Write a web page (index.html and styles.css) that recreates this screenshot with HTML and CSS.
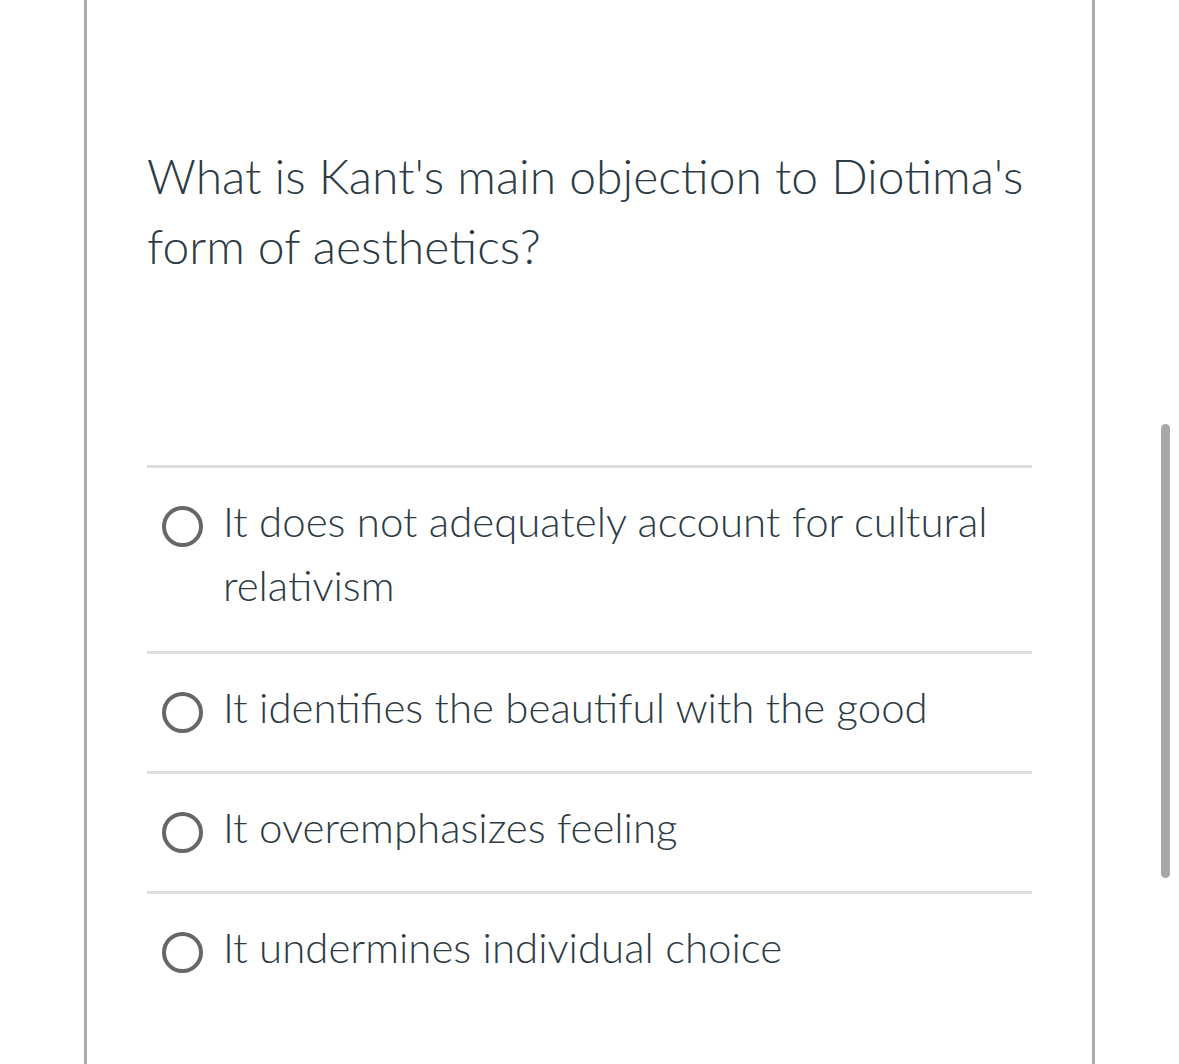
FILE: index.html
```html
<!DOCTYPE html>
<html lang="en">
<head>
<meta charset="utf-8">
<title>Quiz question</title>
<link rel="stylesheet" href="styles.css">
</head>
<body>
<div class="page">
  <div class="question">What is Kant's main objection to Diotima's form of aesthetics?</div>
  <div class="answers">
    <label class="answer"><span class="radio"></span><span class="answer-text">It does not adequately account for cultural relativism</span></label>
    <label class="answer"><span class="radio"></span><span class="answer-text">It identifies the beautiful with the good</span></label>
    <label class="answer"><span class="radio"></span><span class="answer-text">It overemphasizes feeling</span></label>
    <label class="answer"><span class="radio"></span><span class="answer-text">It undermines individual choice</span></label>
  </div>
</div>
<div class="scrollbar"></div>
</body>
</html>
```
FILE: styles.css
```css
html, body {
  margin: 0;
  padding: 0;
  background: #ffffff;
  overflow: hidden;
}
body {
  font-family: "Lato", "Open Sans", sans-serif;
  color: #2d3b45;
  height: 1064px;
}
.page {
  box-sizing: border-box;
  margin-left: 84px;
  width: 1011px;
  height: 1064px;
  border-left: 3px solid #acacac;
  border-right: 3px solid #acacac;
  padding: 141px 60px 0 60px;
}
.question {
  font-size: 48px;
  font-weight: 300;
  line-height: 70px;
  margin-bottom: 184px;
}
.answers {
  display: flex;
  flex-direction: column;
}
.answer {
  display: flex;
  align-items: flex-start;
  gap: 20px;
  border-top: 3px solid #dedede;
  padding: 21px 0 32px 15px;
}
.answer:first-child {
  padding-bottom: 34px;
}
.radio {
  flex: none;
  box-sizing: border-box;
  width: 41px;
  height: 41px;
  border: 4.5px solid #67676b;
  border-radius: 50%;
  margin-top: 17px;
}
.answer-text {
  font-size: 42px;
  font-weight: 300;
  line-height: 64px;
}
.scrollbar {
  position: absolute;
  left: 1161px;
  top: 424px;
  width: 9px;
  height: 454px;
  border-radius: 5px;
  background: #a8a8a8;
}
```
